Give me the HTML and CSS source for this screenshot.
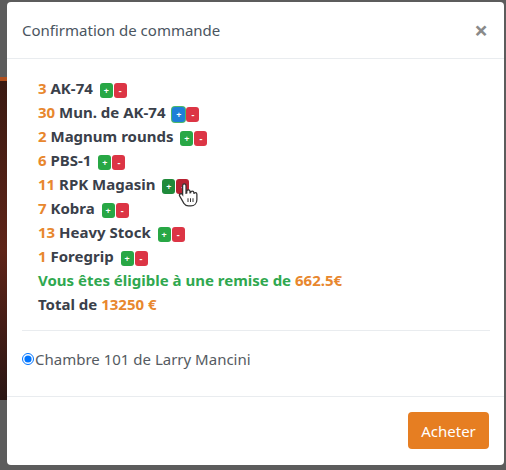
FILE: index.html
```html
<!DOCTYPE html>
<html lang="fr">
<head>
    <meta charset="UTF-8">
    <meta name="viewport" content="width=device-width, initial-scale=1.0">
    <title>Confirmation de commande</title>
    <link rel="stylesheet" href="styles.css">
</head>
<body>
    <div class="modal">
        <div class="modal-header">
            <h5 class="modal-title">Confirmation de commande</h5>
            <span class="close">&times;</span>
        </div>
        <div class="modal-body">
            <ul class="items">
                <li><span class="qty">3</span> AK-74 <span class="btns"><span class="btn plus">+</span><span class="btn minus">-</span></span></li>
                <li><span class="qty">30</span> Mun. de AK-74 <span class="btns"><span class="btn plus focus">+</span><span class="btn minus">-</span></span></li>
                <li><span class="qty">2</span> Magnum rounds <span class="btns"><span class="btn plus">+</span><span class="btn minus">-</span></span></li>
                <li><span class="qty">6</span> PBS-1 <span class="btns"><span class="btn plus">+</span><span class="btn minus">-</span></span></li>
                <li><span class="qty">11</span> RPK Magasin <span class="btns hover"><span class="btn plus">+</span><span class="btn minus">-</span>
                    <svg class="cursor" width="20" height="25" viewBox="0 0 16 20">
                        <path d="M5 1.5c.8 0 1.4.6 1.4 1.4V9l.6-.2V7.6c0-.8.6-1.3 1.3-1.3s1.3.5 1.3 1.3v1l.5-.1c0-.7.6-1.2 1.3-1.2s1.3.6 1.3 1.3v.8c.2-.6.7-.9 1.2-.9.7 0 1.2.6 1.2 1.3v4.3c0 2.9-2 5-4.8 5H8.3c-1.6 0-2.7-.7-3.6-2L1.4 11.3c-.4-.6-.2-1.4.4-1.8.6-.3 1.3-.1 1.7.4l.2.3V2.9c0-.8.6-1.4 1.3-1.4z" fill="#fff" stroke="#333" stroke-width="1"/>
                        <path d="M8 13v3M10 13v3M12 13v3" stroke="#333" stroke-width=".8"/>
                    </svg>
                </span></li>
                <li><span class="qty">7</span> Kobra <span class="btns"><span class="btn plus">+</span><span class="btn minus">-</span></span></li>
                <li><span class="qty">13</span> Heavy Stock <span class="btns"><span class="btn plus">+</span><span class="btn minus">-</span></span></li>
                <li><span class="qty">1</span> Foregrip <span class="btns"><span class="btn plus">+</span><span class="btn minus">-</span></span></li>
                <li class="discount">Vous êtes éligible à une remise de <span class="qty">662.5€</span></li>
                <li>Total de <span class="qty">13250 €</span></li>
            </ul>
            <hr>
            <label class="room"><input type="radio" name="room" checked>Chambre 101 de Larry Mancini</label>
        </div>
        <div class="modal-footer">
            <button class="buy">Acheter</button>
        </div>
    </div>
</body>
</html>
```
FILE: styles.css
```css
body {
    margin: 0;
    padding: 0;
    font-family: "Noto Sans", Arial, sans-serif;
    background-color: #5c5c5c;
    background-image: linear-gradient(to bottom, #5c5c5c 0, #5c5c5c 77px, #b0501e 77px, #b0501e 81px, #3a1a12 81px, #5e2418 250px, #2a1614 400px, #5c5c5c 400px);
    background-size: 8px 100%;
    background-repeat: no-repeat;
}
.modal {
    position: relative;
    margin: 2px 2px 0 7px;
    width: 497px;
    height: 463px;
    background-color: #fff;
    border-radius: 4px;
    display: flex;
    flex-direction: column;
}
.modal-header {
    height: 56px;
    padding: 0 16px 0 15px;
    display: flex;
    align-items: center;
    justify-content: space-between;
    border-bottom: 1px solid #e9ecef;
}
.modal-title {
    margin: 0;
    font-size: 15px;
    font-weight: normal;
    color: #4a5560;
}
.close {
    font-size: 24px;
    font-weight: bold;
    color: #8a8a8a;
    line-height: 1;
}
.modal-body {
    padding: 17px 14px 0 15px;
    height: 338px;
    box-sizing: border-box;
    border-bottom: 1px solid #e9ecef;
}
.items {
    list-style: none;
    margin: 0;
    padding: 0 0 0 16px;
}
.items li {
    height: 24px;
    line-height: 24px;
    font-size: 15px;
    font-weight: bold;
    color: #3a404a;
}
.qty {
    color: #e8872e;
}
.discount {
    color: #2fa84f !important;
}
.btns {
    position: relative;
    display: inline-block;
    height: 15px;
    line-height: 15px;
    vertical-align: -2px;
    margin-left: 3px;
}
.btn {
    display: inline-block;
    width: 13px;
    height: 15px;
    margin-right: 1px;
    border-radius: 3px;
    color: #fff;
    font-size: 9px;
    line-height: 15px;
    text-align: center;
    vertical-align: top;
}
.plus {
    background-color: #28a745;
}
.minus {
    background-color: #dc3545;
}
.plus.focus {
    background-color: #1e7fd8;
    box-shadow: 0 0 0 1px #4cb86a;
}
.hover .plus {
    background-color: #1f8a3a;
}
.hover .minus {
    background-color: #b82232;
}
.cursor {
    position: absolute;
    left: 16px;
    top: 3px;
}
hr {
    margin: 14px 0 0;
    border: 0;
    border-top: 1px solid #e9ecef;
}
.room {
    display: flex;
    align-items: center;
    margin-top: 16px;
    line-height: 24px;
    font-size: 15px;
    color: #555b62;
}
.room input {
    margin: 0 1px 0 0;
    width: 12px;
    height: 12px;
}
.modal-footer {
    flex: 1;
    display: flex;
    justify-content: flex-end;
    align-items: flex-start;
    padding: 15px 15px 0 0;
}
.buy {
    width: 81px;
    height: 37px;
    border: none;
    border-radius: 4px;
    background-color: #e67e22;
    color: #fff;
    font-family: "Noto Sans", Arial, sans-serif;
    font-size: 15px;
}
```
